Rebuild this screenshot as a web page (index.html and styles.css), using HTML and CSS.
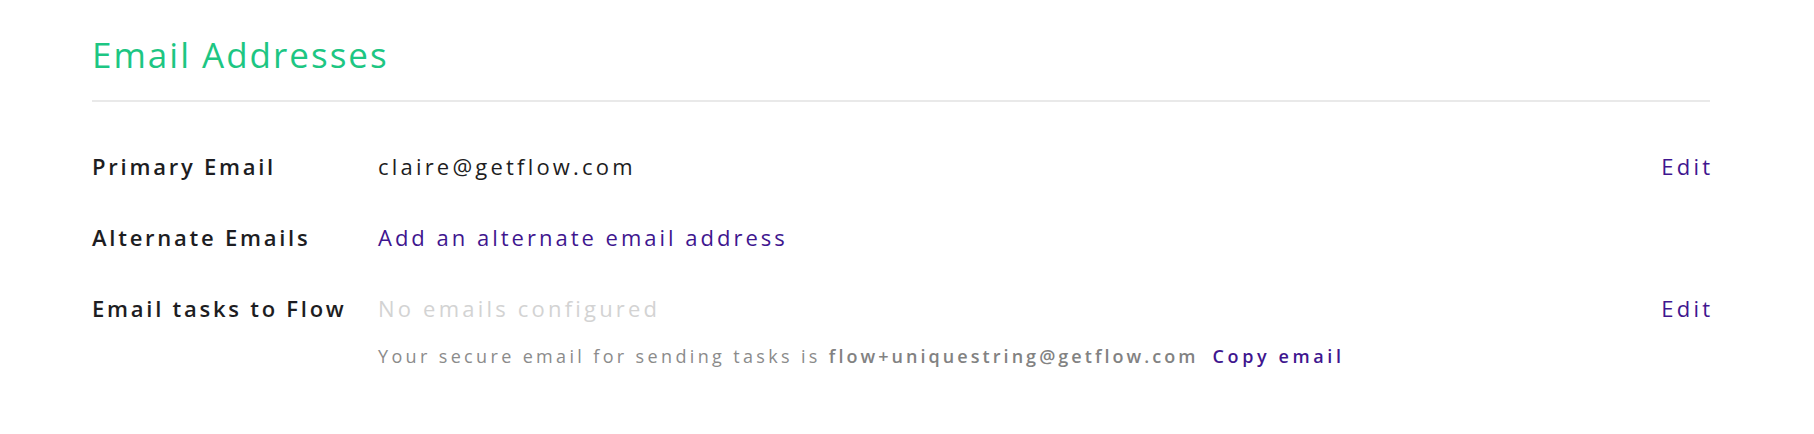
FILE: index.html
```html
<!DOCTYPE html>
<html>
<head>
<meta charset="utf-8">
<link rel="stylesheet" href="styles.css">
</head>
<body>
<section class="panel">
  <h2 class="title">Email Addresses</h2>
  <div class="rows">
    <div class="row">
      <div class="label">Primary Email</div>
      <div class="value">claire@getflow.com</div>
      <a class="action">Edit</a>
    </div>
    <div class="row">
      <div class="label">Alternate Emails</div>
      <div class="value"><a class="link">Add an alternate email address</a></div>
      <span class="action"></span>
    </div>
    <div class="row">
      <div class="label">Email tasks to Flow</div>
      <div class="value">
        <div class="placeholder">No emails configured</div>
        <div class="hint">Your secure email for sending tasks is <strong>flow+uniquestring@getflow.com</strong><a class="copy">Copy email</a></div>
      </div>
      <a class="action">Edit</a>
    </div>
  </div>
</section>
</body>
</html>
```
FILE: styles.css
```css
html, body {
  margin: 0;
  padding: 0;
  background: #ffffff;
}
body {
  font-family: "Open Sans", Lato, sans-serif;
  color: #1d1d22;
}
.panel {
  width: 1618px;
  margin-left: 92px;
  padding-top: 35px;
}
.title {
  margin: 0;
  font-size: 35px;
  font-weight: 400;
  line-height: 40px;
  letter-spacing: 2px;
  color: #1dc683;
  padding-bottom: 25px;
  border-bottom: 2px solid #e9e9e9;
}
.rows {
  display: flex;
  flex-direction: column;
  gap: 41px;
  padding-top: 49px;
}
.row {
  display: grid;
  grid-template-columns: 286px 1fr auto;
  align-items: start;
  font-size: 22px;
  line-height: 30px;
  letter-spacing: 3.2px;
}
.label {
  font-weight: 600;
  letter-spacing: 2.75px;
  color: #1d1d22;
}
.value {
  color: #1d1d22;
}
.link, .action {
  color: #3f168f;
  cursor: pointer;
}
.link {
  letter-spacing: 3px;
}
.action {
  margin-right: -3.2px;
}
.placeholder {
  color: #d3d3d3;
}
.hint {
  margin-top: 20px;
  font-size: 18px;
  line-height: 26px;
  letter-spacing: 3.35px;
  color: #8b8b8b;
}
.hint strong {
  font-weight: 600;
  letter-spacing: 3.05px;
  color: #828282;
}
.copy {
  margin-left: 14px;
  font-weight: 600;
  letter-spacing: 3.6px;
  color: #3f168f;
  cursor: pointer;
}
```
